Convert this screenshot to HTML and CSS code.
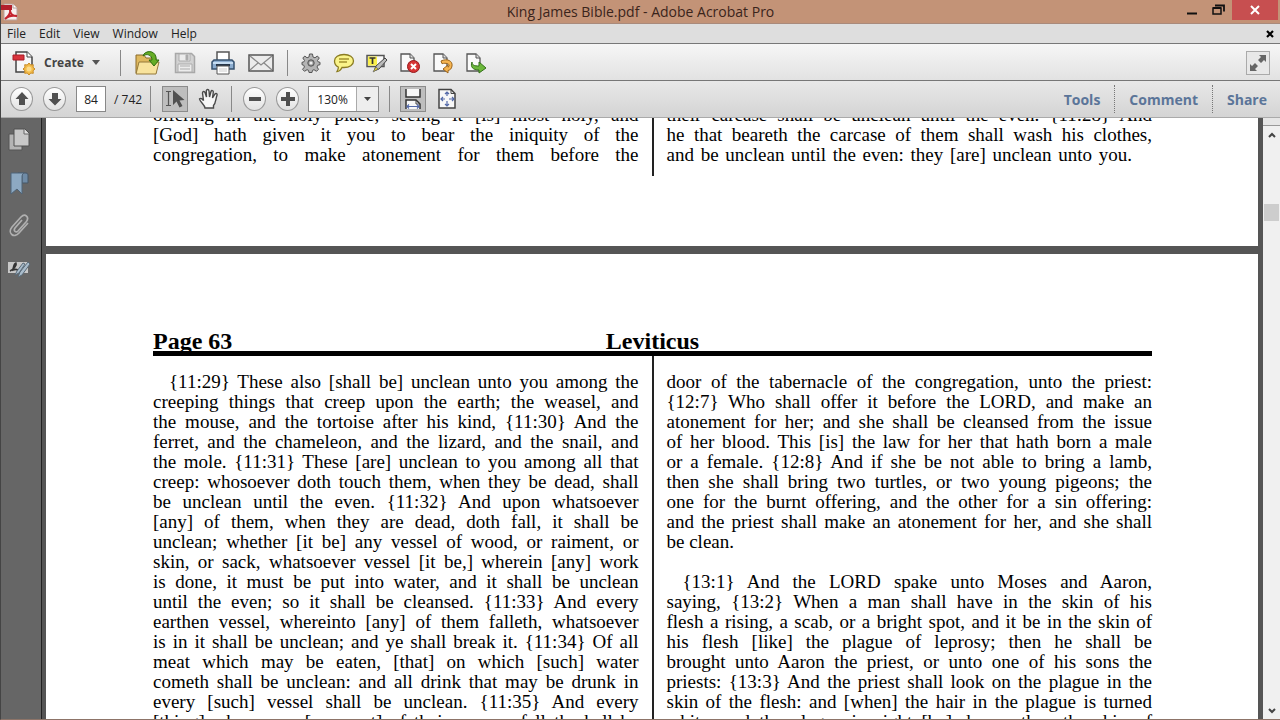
FILE: index.html
```html
<!DOCTYPE html>
<html lang="en">
<head>
<meta charset="utf-8">
<title>King James Bible.pdf - Adobe Acrobat Pro</title>
<link rel="stylesheet" href="styles.css">
</head>
<body>
<div class="app">
  <header class="titlebar">
    <svg class="app-icon" width="18" height="18" viewBox="0 0 18 18" aria-hidden="true"><path d="M3 1h9l4 4v12H3z" fill="#f8efee" stroke="#b9a19b"/><path d="M12 1v4h4" fill="#fff" stroke="#b9a19b"/><path d="M0 2h11v5H0z" fill="#b3202c"/><path d="M4 16c3-2 6-6 5-9 0 4 2 6 7 6-5-1-9 0-12 3z" fill="none" stroke="#c4232e" stroke-width="2"/></svg>
    <h1 class="title">King James Bible.pdf - Adobe Acrobat Pro</h1>
    <div class="window-buttons">
      <button class="win" aria-label="Minimize"><svg width="12" height="14" viewBox="0 0 12 14"><path d="M1 10.500h10" stroke="#111" stroke-width="2"/></svg></button>
      <button class="win" aria-label="Restore"><svg width="14" height="14" viewBox="0 0 14 14"><path d="M1 5h8v6H1z" fill="none" stroke="#111" stroke-width="1.500"/><path d="M1 5h8M3 2.500h9v6" fill="none" stroke="#111" stroke-width="1.800"/></svg></button>
      <button class="win close" aria-label="Close"><svg width="10" height="10" viewBox="0 0 10 10"><path d="M1 1l8 8M9 1l-8 8" stroke="#fff" stroke-width="2"/></svg></button>
    </div>
  </header>

  <nav class="menubar">
    <button class="menu">File</button>
    <button class="menu">Edit</button>
    <button class="menu">View</button>
    <button class="menu">Window</button>
    <button class="menu">Help</button>
    <button class="doc-close" aria-label="Close document"><svg width="8" height="8" viewBox="0 0 8 8"><path d="M1 1l6 6M7 1L1 7" stroke="#000" stroke-width="2.200"/></svg></button>
  </nav>

  <div class="toolbar main-tools">
    <button class="create"><svg width="24" height="24" viewBox="0 0 24 24"><path d="M4 1h11l5 5v15H4z" fill="#f7f7f7" stroke="#444" stroke-width="1.500"/><path d="M15 1v5h5" fill="#fff" stroke="#444"/><path d="M1 4h11v5H1z" fill="#d9333c" stroke="#a81c26"/><path d="M17 12l1.700 2 2.600-.3-.3 2.600 2 1.700-2 1.700.3 2.600-2.600-.3-1.700 2-1.700-2-2.600.3.3-2.600-2-1.700 2-1.700-.3-2.600 2.600.3z" fill="#f4bd4b" stroke="#c88b25"/><circle cx="17" cy="18" r="2.500" fill="#fbdc8c"/></svg><span>Create</span><svg width="8" height="5" viewBox="0 0 8 5"><path d="M0 0h8L4 5z" fill="#555"/></svg></button>
    <span class="sep"></span>
    <div class="group wide">
      <button class="tool" aria-label="Open"><svg width="26" height="26" viewBox="0 0 26 26"><path d="M2 5h8l2 3h10v15H2z" fill="#dfb95f" stroke="#8b6b2b"/><path d="M5 12h20l-3 12H2z" fill="#f8e39d" stroke="#94793a"/><path d="M9 6C10 1 20-1 22 7v3h3l-5 6-5-6h3C18 5 13 3 9 6z" fill="#66ad25" stroke="#2f6d10"/></svg></button>
      <button class="tool" aria-label="Save" disabled><svg width="22" height="22" viewBox="0 0 22 22"><path d="M1.500 1.500h16l3 3v16h-19z" fill="#d2d2d2" stroke="#a8a8a8" stroke-width="1.500"/><path d="M5 2h11v7H5zM4 12h14v8H4z" fill="#ececec" stroke="#acacac"/><path d="M12 3h2v5h-2zM6 14h10M6 17h10" fill="#aaa" stroke="#acacac"/></svg></button>
      <button class="tool" aria-label="Print"><svg width="24" height="24" viewBox="0 0 24 24"><path d="M6 1h12v10H6z" fill="#fff" stroke="#555" stroke-width="1.500"/><path d="M3 9h18l2 2v7H1v-7z" fill="#8cadd0" stroke="#36516f" stroke-width="1.500"/><path d="M2 11h20v2H2z" fill="#c5dcf1"/><path d="M5 14h14" stroke="#26364a" stroke-width="2"/><path d="M6 15h12v8H6z" fill="#fff" stroke="#555"/><path d="M8 18h8M8 20h8" stroke="#ccc"/></svg></button>
      <button class="tool" aria-label="Email"><svg width="26" height="18" viewBox="0 0 26 18"><path d="M1 1h24v16H1z" fill="#ececec" stroke="#555" stroke-width="1.500"/><path d="M2 2l11 9L24 2M2 16l8-7M24 16l-8-7" fill="none" stroke="#8a8a8a" stroke-width="1.300"/></svg></button>
    </div>
    <span class="sep"></span>
    <div class="group">
      <button class="tool" aria-label="Preferences"><svg width="20" height="20" viewBox="0 0 20 20"><path d="M8.500 1h3l.5 3 2 .8 2.300-1.800 2 2L16.500 7.500l.8 1.500 1.700.300v2.400l-2.200.500-.8 1.800 1.500 2.300-2 2-2.500-1.600-1.500.6-.5 2.200h-3l-.5-2.200-1.500-.6-2.500 1.600-2-2L3.500 14l-.8-1.800L1 11.700V9.300L2.700 9l.8-1.500L1.800 5l2-2L6 4.800 8 4z" fill="#b4b4b4" stroke="#555"/><circle cx="10" cy="10" r="3.200" fill="#999" stroke="#555"/><circle cx="10" cy="10" r="1.600" fill="#eee"/></svg></button>
      <button class="tool" aria-label="Add comment"><svg width="22" height="20" viewBox="0 0 22 20"><path d="M11 1.500c5.500 0 9.500 2.500 9.500 6.500s-4 6.500-9.500 6.500l-2 0c-1 2-3 4-5 4 1-1.500 1.500-3 1.300-4.500C3 13 1.500 11 1.500 8 1.500 4 5.500 1.500 11 1.500z" fill="#faf48a" stroke="#8a7b22" stroke-width="1.300"/><path d="M6 6h10M6 9h8" stroke="#a2912f" stroke-width="1.300"/></svg></button>
      <button class="tool" aria-label="Highlight text"><svg width="22" height="20" viewBox="0 0 22 20"><path d="M1 2.500h17v11H1z" fill="#fafafa" stroke="#555" stroke-width="1.500"/><path d="M2 3.500h9v9H2z" fill="#fbf04a"/><path d="M3.500 5h6M6.500 5v6" stroke="#333" stroke-width="1.700"/><path d="M8 18l2-5 9-8 2 2-8 9z" fill="#bbb" stroke="#444"/><path d="M7 19l3-5 2 2z" fill="#e7d425" stroke="#666" stroke-width=".7"/></svg></button>
      <button class="tool" aria-label="Delete pages"><svg width="22" height="22" viewBox="0 0 22 22"><path d="M2 2h9l4 4v13H2z" fill="#fafafa" stroke="#555" stroke-width="1.300"/><path d="M11 2v4h4" fill="#ddd" stroke="#555"/><circle cx="14.500" cy="14.500" r="6" fill="#d73434" stroke="#96191c"/><path d="M12 12l5 5M17 12l-5 5" stroke="#fff" stroke-width="2"/></svg></button>
      <button class="tool" aria-label="Rotate pages"><svg width="22" height="22" viewBox="0 0 22 22"><path d="M2 2h9l4 4v13H2z" fill="#fafafa" stroke="#555" stroke-width="1.300"/><path d="M11 2v4h4" fill="#ddd" stroke="#555"/><path d="M9 9c6-3 12 0 11 5-.5 3-2 4-4 4.500V21l-5-4 5-4v2.200c3-2 0-5-6-3.500z" fill="#f6b552" stroke="#9b641b"/></svg></button>
      <button class="tool" aria-label="Extract pages"><svg width="22" height="22" viewBox="0 0 22 22"><path d="M2 2h9l4 4v13H2z" fill="#fafafa" stroke="#555" stroke-width="1.300"/><path d="M11 2v4h4" fill="#ddd" stroke="#555"/><path d="M7 10c0 3 2 4 7 4v-4l7 6-7 5v-3c-6 0-9-3-7-8z" fill="#6cb83b" stroke="#337019"/></svg></button>
    </div>
    <button class="expand" aria-label="Read mode"><svg width="18" height="18" viewBox="0 0 18 18"><path d="M10 1h7v7l-2-2-3 3-3-3 3-3zM8 17H1v-7l2 2 3-3 3 3-3 3z" fill="#666"/></svg></button>
  </div>

  <div class="toolbar nav-tools">
    <div class="group">
      <button class="round" aria-label="Previous page"><svg width="14" height="14" viewBox="0 0 14 14"><path d="M7 0l6.500 7H10v6H4V7H.5z" fill="#505050"/></svg></button>
      <button class="round" aria-label="Next page"><svg width="14" height="14" viewBox="0 0 14 14"><path d="M7 13.500L13.500 7H10V1H4v6H.5z" fill="#505050"/></svg></button>
    </div>
    <label class="page-field"><input class="page-no" type="text" value="84" aria-label="Page number"><span>/ 742</span></label>
    <span class="sep"></span>
    <button class="select-tool" aria-label="Selection tool"><svg width="20" height="20" viewBox="0 0 20 20"><path d="M1 2.500h5M3.500 2.500v14M1 16.500h5" stroke="#555" stroke-width="1.200"/><path d="M8 1v15l3.500-3.500 3 6 3-1.500-3-5.500 5-.5z" fill="#505050"/></svg></button>
    <button class="tool" aria-label="Hand tool"><svg width="22" height="22" viewBox="0 0 22 22"><path d="M7 20c0-3-5-6-5.500-9 1-1.500 3 0 4 1.500L4.500 5c0-2 2-2 2.500-.5L8.500 9 8.300 3c0-2 2.500-2 2.700 0l.5 6 1.500-5.500c.5-1.500 2.500-1 2.300.5L14.500 10l2.500-4c1-1.200 2.600-.3 2 1.200C17.500 11 18 15 15.500 17.500V20z" fill="#f7f7f7" stroke="#4a4a4a" stroke-width="1.400"/></svg></button>
    <span class="sep"></span>
    <div class="group">
      <button class="round" aria-label="Zoom out"><svg width="14" height="14" viewBox="0 0 14 14"><path d="M1 5h12v4H1z" fill="#505050"/></svg></button>
      <button class="round" aria-label="Zoom in"><svg width="14" height="14" viewBox="0 0 14 14"><path d="M5 0h4v5h5v4H9v5H5V9H0V5h5z" fill="#505050"/></svg></button>
    </div>
    <div class="zoom"><input class="zoom-value" type="text" value="130%" aria-label="Zoom level"><button class="zoom-arrow" aria-label="Zoom presets"><svg width="7" height="4" viewBox="0 0 7 4"><path d="M0 0h7L3.500 4z" fill="#444"/></svg></button></div>
    <span class="sep"></span>
    <button class="fit-width" aria-label="Fit width"><svg width="20" height="22" viewBox="0 0 20 22"><path d="M3 1v8h14V1" fill="#f8f8f8" stroke="#333" stroke-width="1.500"/><path d="M3 21v-9h10l4 4v5" fill="#f8f8f8" stroke="#333" stroke-width="1.500"/><path d="M13 12v4h4" fill="none" stroke="#444"/><path d="M4 18.500h12M6 16.500l-2 2 2 2M14 16.500l2 2-2 2" fill="none" stroke="#5369a8" stroke-width="1.200"/></svg></button>
    <button class="tool" aria-label="Fit page"><svg width="20" height="22" viewBox="0 0 20 22"><path d="M2 1.500h12l4 4V20H2z" fill="#f8f8f8" stroke="#444" stroke-width="1.500"/><path d="M14 1.500v4h4" fill="none" stroke="#444"/><path d="M10 4v4M10 13v5M4 11h4M12 11h5M8 6l2-2 2 2M8 16l2 2 2-2M6 9l-2 2 2 2M15 9l2 2-2 2" fill="none" stroke="#5369a8" stroke-width="1.200"/></svg></button>
    <div class="panes">
      <button class="pane">Tools</button>
      <button class="pane">Comment</button>
      <button class="pane">Share</button>
    </div>
  </div>

  <main class="workspace">
    <aside class="sidebar">
      <button class="side" aria-label="Page thumbnails"><svg width="22" height="24" viewBox="0 0 22 24"><path d="M1 6h13v16H1z" fill="#b4b4b4" stroke="#555"/><path d="M6 1h11l4 4v13H6z" fill="#c8c8c8" stroke="#505050"/><path d="M16 1v5h5" fill="#ddd" stroke="#666"/></svg></button>
      <button class="side" aria-label="Bookmarks"><svg width="22" height="24" viewBox="0 0 22 24"><path d="M10 2h8c2 0 2 2 2 3v7h-6V4z" fill="#6f8ba6" stroke="#465767"/><path d="M3 2h13c-2 1-2 3-2 4v17l-5-5-6 5z" fill="#8da9c2" stroke="#4f6478"/></svg></button>
      <button class="side" aria-label="Attachments"><svg width="22" height="24" viewBox="0 0 22 24"><path d="M14 6l-7 8c-2 3 1 5 3 3l8-9c4-5-1-9-5-5L4 13c-5 6 2 12 7 6l9-10" fill="none" stroke="#b0b0b0" stroke-width="1.700"/></svg></button>
      <button class="side" aria-label="Signatures"><svg width="24" height="20" viewBox="0 0 24 20"><path d="M1 3h20v11H1z" fill="#c8c8c8"/><path d="M3 12c4-2 7-6 6-8-2 0-3 6-3 7 2-1 3-1 5 0" fill="none" stroke="#333" stroke-width="1.600"/><path d="M11 18l2-5 8-10 2 2-8 11zM8 16l2-4 6-8 2 1-6 9z" fill="#a9bccb" stroke="#596a78"/></svg></button>
    </aside>

    <div class="document">
      <section class="page page-previous">
        <div class="columns">
          <div class="column"><p>offering in the holy place, seeing it [is] most holy, and<br>[God] hath given it you to bear the iniquity of the<br>congregation, to make atonement for them before the</p></div>
          <div class="rule"></div>
          <div class="column"><p>their carcase shall be unclean until the even. {11:28} And<br>he that beareth the carcase of them shall wash his clothes,</p><p class="nearly-full">and be unclean until the even: they [are] unclean unto you.</p></div>
        </div>
      </section>
      <section class="page page-current">
        <div class="running-head"><span>Page 63</span><h2>Leviticus</h2></div>
        <div class="columns">
          <div class="column"><p class="indent">{11:29} These also [shall be] unclean unto you among the<br>creeping things that creep upon the earth; the weasel, and<br>the mouse, and the tortoise after his kind, {11:30} And the<br>ferret, and the chameleon, and the lizard, and the snail, and<br>the mole. {11:31} These [are] unclean to you among all that<br>creep: whosoever doth touch them, when they be dead, shall<br>be unclean until the even. {11:32} And upon whatsoever<br>[any] of them, when they are dead, doth fall, it shall be<br>unclean; whether [it be] any vessel of wood, or raiment, or<br>skin, or sack, whatsoever vessel [it be,] wherein [any] work<br>is done, it must be put into water, and it shall be unclean<br>until the even; so it shall be cleansed. {11:33} And every<br>earthen vessel, whereinto [any] of them falleth, whatsoever<br>is in it shall be unclean; and ye shall break it. {11:34} Of all<br>meat which may be eaten, [that] on which [such] water<br>cometh shall be unclean: and all drink that may be drunk in<br>every [such] vessel shall be unclean. {11:35} And every<br>[thing] whereupon [any part] of their carcase falleth shall be</p></div>
          <div class="rule"></div>
          <div class="column"><p>door of the tabernacle of the congregation, unto the priest:<br>{12:7} Who shall offer it before the LORD, and make an<br>atonement for her; and she shall be cleansed from the issue<br>of her blood. This [is] the law for her that hath born a male<br>or a female. {12:8} And if she be not able to bring a lamb,<br>then she shall bring two turtles, or two young pigeons; the<br>one for the burnt offering, and the other for a sin offering:<br>and the priest shall make an atonement for her, and she shall</p><p class="last">be clean.</p><p class="indent chapter">{13:1} And the LORD spake unto Moses and Aaron,<br>saying, {13:2} When a man shall have in the skin of his<br>flesh a rising, a scab, or a bright spot, and it be in the skin of<br>his flesh [like] the plague of leprosy; then he shall be<br>brought unto Aaron the priest, or unto one of his sons the<br>priests: {13:3} And the priest shall look on the plague in the<br>skin of the flesh: and [when] the hair in the plague is turned<br>white, and the plague in sight [be] deeper than the skin of</p></div>
        </div>
      </section>
    </div>

    <div class="scrollbar">
      <span class="splitter"></span>
      <button class="scroll-arrow" aria-label="Scroll up"><svg width="8" height="6" viewBox="0 0 8 6"><path d="M1 5l3-3 3 3" fill="none" stroke="#444" stroke-width="2"/></svg></button>
      <div class="track"><div class="thumb"></div></div>
      <button class="scroll-arrow" aria-label="Scroll down"><svg width="8" height="6" viewBox="0 0 8 6"><path d="M1 1l3 3 3-3" fill="none" stroke="#444" stroke-width="2"/></svg></button>
    </div>
  </main>
</div>
</body>
</html>
```
FILE: styles.css
```css
* { box-sizing: border-box; }

body {
  margin: 0;
  font-family: "Open Sans", "Noto Sans", sans-serif;
  font-size: 12px;
  color: #222;
}

button {
  margin: 0;
  padding: 0;
  border: 0;
  background: none;
  color: inherit;
  font: inherit;
  display: flex;
  align-items: center;
  justify-content: center;
}

input { font: inherit; color: inherit; }
svg { display: block; flex: none; }
h1, h2, p { margin: 0; font: inherit; }

.app {
  height: 100vh;
  display: flex;
  flex-direction: column;
  overflow: hidden;
  border-left: 1px solid #444;
  border-bottom: 1px solid #8d7468;
}

/* Title bar */
.titlebar {
  flex: none;
  height: 24px;
  display: grid;
  grid-template-columns: 1fr auto 1fr;
  align-items: center;
  background: #c39377;
  border-bottom: 1px solid #a98a7b;
}
.title { font-size: 14px; line-height: 20px; color: #3a241b; }
.window-buttons { display: flex; justify-content: flex-end; align-self: start; padding-right: 2px; }
.win { width: 27px; height: 20px; }
.win.close { width: 46px; background: #c74f50; }

/* Menus */
.menubar {
  flex: none;
  height: 20px;
  display: flex;
  align-items: center;
  gap: 13px;
  padding: 0 6px;
  background: #dedede;
  border-bottom: 1px solid #777;
}
.menu { line-height: 16px; }
.doc-close { margin-left: auto; }

/* Toolbars */
.toolbar { flex: none; height: 37px; display: flex; align-items: center; }
.main-tools {
  padding: 1px 10px 0 11px;
  background: linear-gradient(#f6f6f6, #e2e2e2);
  border-bottom: 1px solid #777;
}
.nav-tools {
  padding: 0 12px 0 4px;
  background: linear-gradient(#e8e8e8, #d4d4d4);
  border-bottom: 1px solid #aaa;
}
.group { display: flex; }
.tool { width: 33px; height: 30px; }
.wide .tool { width: 38px; }
.sep { width: 1px; height: 26px; background: #888; }
.create { gap: 8px; margin-right: 20px; font-weight: bold; color: #444; }
.main-tools .group { margin: 0 7px; }
.expand {
  width: 24px;
  height: 24px;
  margin-left: auto;
  border: 1px solid #aaa;
  background: #e8e8e8;
}
.round { width: 33px; height: 30px; position: relative; }
.round::before {
  content: "";
  position: absolute;
  inset: 3px 5px;
  border: 1px solid #999;
  border-radius: 50%;
  background: linear-gradient(#fff, #e2e2e2);
}
.round svg { position: relative; }
.page-field { display: flex; align-items: center; gap: 8px; margin: 0 8px 0 5px; }
.page-no {
  width: 30px;
  height: 26px;
  padding: 0;
  text-align: center;
  border: 1px solid #888;
  background: #fff;
}
.select-tool, .fit-width {
  width: 26px;
  height: 26px;
  border: 1px solid #8b8b8b;
  background: #bebebe;
}
.select-tool { margin: 0 4px 0 11px; }
.nav-tools .tool + .sep { margin: 0 6px; }
.zoom {
  display: flex;
  width: 71px;
  height: 26px;
  margin: 0 10px 0 4px;
  border: 1px solid #888;
  background: #fff;
}
.zoom-value { flex: 1; min-width: 0; padding: 0; text-align: center; border: 0; background: none; }
.zoom-arrow { width: 22px; border-left: 1px solid #aaa; background: #eee; }
.fit-width { margin: 0 4px 0 10px; }
.panes { display: flex; margin-left: auto; }
.pane {
  height: 28px;
  padding: 0 14px;
  font-size: 14px;
  font-weight: bold;
  color: #5b7599;
}
.pane + .pane { border-left: 1px dotted #777; }
.pane:last-child { padding-right: 1px; }

/* Work area */
.workspace { flex: 1; min-height: 0; display: flex; background: #555; }
.sidebar {
  width: 41px;
  flex: none;
  display: flex;
  flex-direction: column;
  align-items: stretch;
  padding: 0 5px 0 0;
  background: #666;
  border-right: 1px solid #222;
}
.side { height: 43px; }
.document {
  flex: 1;
  min-width: 0;
  margin: 0 5px 0 4px;
  display: flex;
  flex-direction: column;
  gap: 8px;
  overflow: hidden;
}
.page {
  flex: none;
  padding: 0 106px 0 107px;
  background: #fff;
  color: #000;
  font-family: "Liberation Serif", "Times New Roman", serif;
  font-size: 19px;
  line-height: 20px;
}
.page-previous {
  height: 128px;
  display: flex;
  flex-direction: column;
  justify-content: flex-end;
  padding-bottom: 70px;
  overflow: hidden;
}
.page-current { padding-top: 77px; }
.columns { display: grid; grid-template-columns: 1fr 2px 1fr; column-gap: 13px; }
.column { min-width: 0; white-space: nowrap; text-align: justify; text-align-last: justify; }
.page-previous .column { padding-bottom: 11px; }
.page-current .column { padding-top: 16px; }
.rule { background: #222; }
.indent { text-indent: 16px; }
.last { text-align-last: left; }
.nearly-full { padding-right: 20px; }
.chapter { margin-top: 20px; }
.running-head {
  display: grid;
  grid-template-columns: 1fr auto 1fr;
  font-size: 24px;
  font-weight: bold;
  line-height: 20px;
  border-bottom: 5px solid #000;
}

/* Scroll bar */
.scrollbar {
  width: 17px;
  flex: none;
  display: flex;
  flex-direction: column;
  background: #f0f0f0;
}
.splitter { height: 8px; background: #e6e6e6; border-bottom: 1px solid #999; }
.scroll-arrow { height: 17px; }
.track { flex: 1; padding-top: 61px; }
.thumb { height: 17px; margin: 0 1px; background: #cdcdcd; }
```
